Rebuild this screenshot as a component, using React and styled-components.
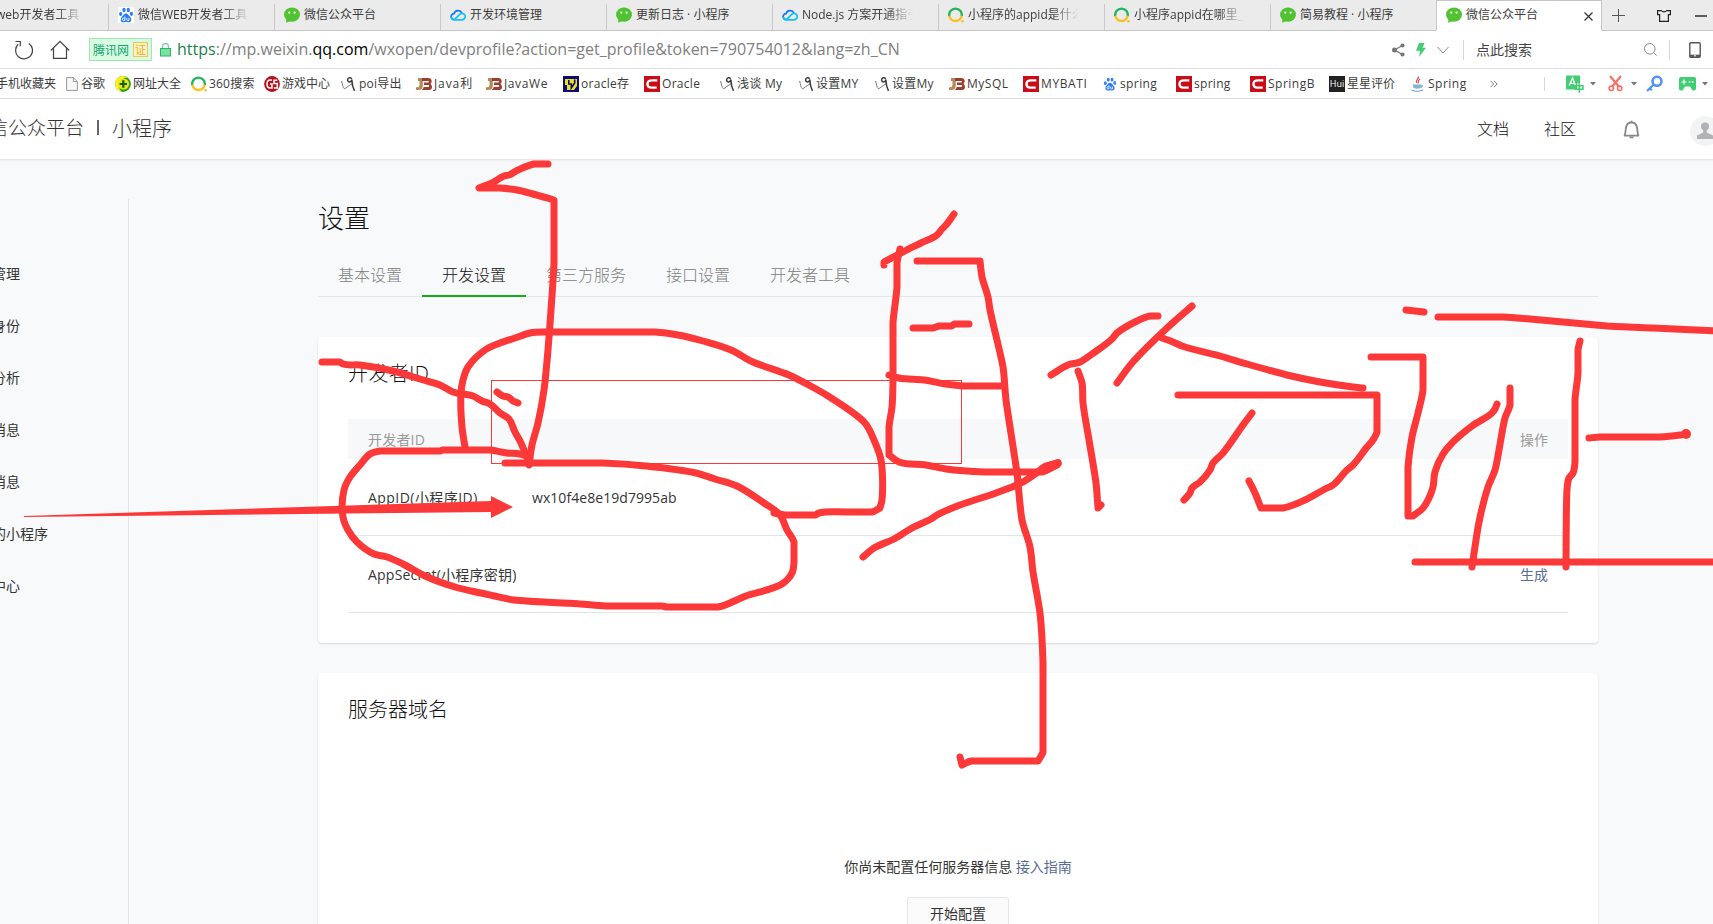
import React from "react";
import styled, { createGlobalStyle } from "styled-components";

const Global = createGlobalStyle`
  html, body { margin: 0; padding: 0; height: 100%; overflow: hidden; }
  body { background: #f8f9fb; font-family: "Open Sans", "Noto Sans CJK SC", sans-serif; color: #353535; }
  #root { height: 100%; }
  * { box-sizing: border-box; }
  svg { display: block; flex: none; }
`;

const Page = styled.div`
  position: relative;
  display: flex;
  flex-direction: column;
  width: 1713px;
  height: 924px;
  overflow: hidden;
`;

/* ---------- browser chrome ---------- */
const TabStrip = styled.div`
  display: flex;
  flex: none;
  height: 31px;
  background: #ebebeb;
`;
const TabList = styled.div`
  display: flex;
  flex: none;
  margin-left: -58px;
`;
const Tab = styled.div`
  display: flex;
  align-items: center;
  width: 166px;
  height: 31px;
  padding: 0 9px 2px 10px;
  border-bottom: 1px solid ${(p) => (p.$active ? "#fff" : "#c6c6c6")};
  border-top: 1px solid ${(p) => (p.$active ? "#c6c6c6" : "#ebebeb")};
  background: ${(p) =>
    p.$active ? "#fff" : "linear-gradient(#c8c8c8, #c8c8c8) left 0 top 3px / 1px 27px no-repeat #ebebeb"};
  ${(p) => p.$active && "border-left: 1px solid #c6c6c6; border-right: 1px solid #c6c6c6; padding-left: 9px;"}
`;
const TabLabel = styled.span`
  flex: none;
  width: 112px;
  margin-left: 4px;
  overflow: hidden;
  white-space: nowrap;
  font-size: 12px;
  line-height: 18px;
  color: #3c3c3c;
  mask-image: ${(p) => (p.$fade ? "linear-gradient(90deg, #000 84px, transparent 111px)" : "none")};
`;
const TabClose = styled.span`
  margin-left: 6px;
  padding-top: 3px;
`;
const TabTools = styled.div`
  display: flex;
  flex: 1;
  align-items: center;
  padding: 1px 0 0 10px;
  border-bottom: 1px solid #c6c6c6;
`;
const Gap = styled.span`
  flex: none;
  width: ${(p) => p.$w}px;
`;

const AddressBar = styled.div`
  display: flex;
  flex: none;
  align-items: center;
  height: 38px;
  padding-left: 14px;
  background: #fff;
  border-bottom: 1px solid #dedede;
`;
const SiteBadge = styled.span`
  display: flex;
  align-items: center;
  width: 63px;
  height: 23px;
  margin-left: 19px;
  padding-left: 3px;
  border: 1px solid #9fe8b4;
  background: #d9fbe1;
  color: #12a573;
  font-size: 12px;
`;
const CertMark = styled.span`
  display: flex;
  align-items: center;
  justify-content: center;
  width: 15px;
  height: 15px;
  margin-left: 4px;
  border: 1px solid #f3c552;
  background: #fdf4c8;
  color: #efae1d;
  font-size: 11px;
  line-height: 13px;
`;
const Url = styled.span`
  width: 1215px;
  margin-left: 6px;
  padding-bottom: 2px;
  font-size: 16px;
  line-height: 22px;
  letter-spacing: 0.01px;
  color: #808080;
  white-space: nowrap;
  i { font-style: normal; color: #1b7f4b; }
  b { font-weight: 400; color: #000; }
`;
const Rule = styled.span`
  flex: none;
  width: 1px;
  height: ${(p) => p.$h}px;
  background: #d6d6d6;
`;
const SearchHint = styled.span`
  width: 168px;
  margin-left: 12px;
  font-size: 14px;
  line-height: 20px;
  color: #444;
`;

const BookmarkBar = styled.div`
  display: flex;
  flex: none;
  align-items: center;
  height: 30px;
  background: #fff;
  border-bottom: 1px solid #dedede;
`;
const Bookmark = styled.span`
  display: flex;
  flex: none;
  align-items: center;
  width: ${(p) => p.$w}px;
  height: 28px;
  font-size: 12px;
  line-height: 18px;
  letter-spacing: ${(p) => p.$ls || 0}px;
  color: #3c3c3c;
  white-space: nowrap;
`;
const MobileBookmark = styled(Bookmark)`
  margin-left: -4px;
`;
const BookmarkIcon = styled.span`
  display: flex;
  flex: none;
  width: ${(p) => p.$w || 18}px;
  letter-spacing: 0;
`;
const Fold = styled.span`
  display: flex;
  width: 54px;
`;

/* ---------- site ---------- */
const SiteHeader = styled.header`
  display: flex;
  flex: none;
  align-items: center;
  height: 61px;
  background: #fff;
  border-bottom: 1px solid #e4e6e9;
  box-shadow: 0 1px 2px rgba(0, 0, 0, 0.05);
`;
const Brand = styled.div`
  display: flex;
  flex: none;
  align-items: center;
  width: 1477px;
  padding-bottom: 4px;
  color: #333;
  font-weight: 300;
  white-space: nowrap;
`;
const BrandName = styled.span`
  margin-left: -30px;
  font-size: 19px;
`;
const BrandBar = styled.span`
  width: 2px;
  height: 15px;
  margin: 0 13px 0 13px;
  background: #666;
`;
const BrandProduct = styled.span`
  font-size: 20px;
`;
const NavLink = styled.span`
  flex: none;
  width: ${(p) => p.$w}px;
  padding-bottom: 2px;
  font-size: 16px;
  font-weight: 300;
  color: #111;
`;
const Avatar = styled.span`
  flex: none;
  display: flex;
  align-items: center;
  justify-content: center;
  width: 30px;
  height: 30px;
  margin: 3px 0 0 50px;
  border-radius: 50%;
  background: #f2f3f4;
`;

const Body = styled.div`
  display: flex;
  flex: 1;
  min-height: 0;
`;
const Sidebar = styled.nav`
  flex: none;
  width: 129px;
  margin-top: 39px;
  padding-top: 49px;
  border-right: 1px solid #e4e5e8;
`;
const SideItem = styled.div`
  height: 52px;
  margin-left: -36px;
  font-size: 14px;
  line-height: 52px;
  color: #353535;
  white-space: nowrap;
`;
const Main = styled.main`
  flex: none;
  width: 1280px;
  margin-left: 189px;
`;
const PageTitle = styled.h2`
  margin: 37px 0 0;
  font-size: 26px;
  font-weight: 300;
  line-height: 42px;
  color: #111;
`;
const SubTabs = styled.div`
  display: flex;
  height: 58px;
  border-bottom: 1px solid #e4e5e8;
`;
const SubTab = styled.span`
  flex: none;
  height: 58px;
  padding: 0 20px;
  font-size: 16px;
  font-weight: 300;
  line-height: 73px;
  color: ${(p) => (p.$active ? "#111" : "#808080")};
  border-bottom: ${(p) => (p.$active ? "2px solid #1aad19" : "0")};
`;
const Card = styled.section`
  height: ${(p) => p.$h}px;
  margin-top: ${(p) => p.$top}px;
  padding: 21px 30px 0;
  border-radius: 4px;
  background: #fff;
  box-shadow: 0 1px 2px rgba(0, 0, 0, 0.14);
`;
const CardTitle = styled.h3`
  margin: 0;
  font-size: 20px;
  font-weight: 300;
  line-height: 31px;
  color: #111;
  letter-spacing: ${(p) => p.$ls || 0}px;
`;
const Row = styled.div`
  display: flex;
  align-items: center;
  height: ${(p) => (p.$head ? 40 : 77)}px;
  margin-top: ${(p) => (p.$head ? 30 : 0)}px;
  padding: 0 20px;
  font-size: 14px;
  background: ${(p) => (p.$head ? "#f6f8f9" : "#fff")};
  color: ${(p) => (p.$head ? "#9a9a9a" : "#353535")};
  border-bottom: ${(p) => (p.$head ? "0" : "1px solid #e4e5e8")};
`;
const Cell = styled.span`
  width: ${(p) => p.$w}px;
  white-space: nowrap;
  letter-spacing: ${(p) => p.$ls || 0}px;
`;
const Link = styled.a`
  color: #576b95;
`;
const EmptyState = styled.div`
  display: flex;
  flex-direction: column;
  align-items: center;
  margin-top: 131px;
  font-size: 14px;
  line-height: 22px;
`;
const SetupButton = styled.button`
  width: 102px;
  height: 34px;
  margin-top: 19px;
  padding: 0 0 1px;
  border: 1px solid #e4e5e8;
  border-radius: 3px;
  background: #fbfbfb;
  font: inherit;
  color: #353535;
`;
const Ink = styled.svg`
  position: absolute;
  inset: 0;
  pointer-events: none;
`;

/* ---------- icons ---------- */
const I = ({ s = 16, w, h, v, children }) => (
  <svg width={w || s} height={h || s} viewBox={v || `0 0 ${w || s} ${h || s}`} fill="none">
    {children}
  </svg>
);
const WeChat = () => (
  <I>
    <ellipse cx="8" cy="7.6" rx="8" ry="7.2" fill="#51c332" />
    <path d="M2.6 12 L2 15.8 L6.5 14Z" fill="#51c332" />
    <circle cx="5.3" cy="5.6" r="1.1" fill="#fff" />
    <circle cx="10.6" cy="5.6" r="1.1" fill="#fff" />
  </I>
);
const Paw = ({ plain, s = 16 }) => (
  <I s={s} v="0 0 16 16">
    {!plain && <rect width="16" height="16" fill="#fff" />}
    <g fill="#2f7df6">
      <ellipse cx="2.7" cy="7" rx="1.6" ry="2.1" />
      <ellipse cx="6" cy="3" rx="1.6" ry="2.2" />
      <ellipse cx="10.3" cy="3" rx="1.6" ry="2.2" />
      <ellipse cx="13.4" cy="6.8" rx="1.6" ry="2.1" />
      <path d="M8 6.6c2 0 2.600 2 4.200 3.300 1.600 1.400 1.500 5.300-1.200 5.400-1.300 0-2-.3-3-.3s-1.700.3-3 .3C2.300 15.200 2.200 11.300 3.800 9.900 5.400 8.600 6 6.600 8 6.600z" />
    </g>
    <path d="M6.900 9.600v3.900H5.600a1.200 1.200 0 0 1 0-2.400h1.300M8.800 11v1.800q0 .8 .8 .8h1.300V11" stroke="#fff" strokeWidth=".9" />
  </I>
);
const Cloud = () => (
  <I>
    <path d="M4.200 12.700a3 3 0 0 1-.2-6A4.300 4.300 0 0 1 12 6" stroke="#1677f0" strokeWidth="1.700" />
    <path d="M4 12.800h8a3.200 3.200 0 1 0-2.500-5.200L4.300 12.700" stroke="#13c2f5" strokeWidth="1.700" strokeLinejoin="round" />
    <path d="M4.200 12.700a3 3 0 0 1-2.700-2.500" stroke="#13c2f5" strokeWidth="1.700" />
  </I>
);
const Ring = () => (
  <I>
    <path d="M1.300 9A6.300 6.300 0 1 1 13.700 9" stroke="#20b65c" strokeWidth="2.400" />
    <path d="M1.300 8.800A6.300 6.300 0 0 0 13.700 8.800" stroke="#fcc01e" strokeWidth="2.400" />
    <circle cx="14.500" cy="14.300" r="1.300" fill="#fcc01e" />
  </I>
);
const FileIcon = () => (
  <I w={12} h={14}>
    <path d="M.6 .6h6.800l4 4v8.800H.6z" fill="#f7f7f7" stroke="#999" />
    <path d="M7.400 .6v4h4" stroke="#999" />
  </I>
);
const PlusBall = () => (
  <I>
    <circle cx="8" cy="8" r="7.900" fill="#2f9e12" />
    <path d="M.2 8.500A7.800 7.800 0 0 1 12.500 1.600C7 2 3.500 5.500 3.800 9.500 4 12 5 13.500 6.500 15.700A7.800 7.800 0 0 1 .2 8.500z" fill="#fff11b" />
    <circle cx="8.500" cy="8" r="5.600" fill="#e9e51c" />
    <path d="M8.300 4.300v7.400M4.600 8H12" stroke="#12601a" strokeWidth="2.200" />
  </I>
);
const GameBall = () => (
  <I>
    <circle cx="8" cy="8" r="7.900" fill="#b90f1d" />
    <path d="M8 4H6.200C3.900 4 3 6 3 8s.9 4 3.200 4H8V8H6M13.300 4.200H10v3.400h3.300V12H9.800" stroke="#fff" strokeWidth="1.500" />
  </I>
);
const Scrawl = () => (
  <I w={15} h={16}>
    <path d="M.6 5C1.600 8 1.500 11.500 3.500 12.800 5.500 12 7.500 9.500 11.500 7.600" stroke="#777" strokeWidth="1" />
    <path d="M10.800 2.700C8.700 .8 6.400 2 6.600 4.200c.3 2.500 3.700 2.200 4.200-.6C11 8 12 12 13.500 14.800" stroke="#3a3a3a" strokeWidth="1.500" />
  </I>
);
const JB = () => (
  <I>
    <path d="M2 2h4.800v7.500Q6.800 14 2 14H0v-2.800h1.500Q3.500 11.200 3.500 9V5H2z" fill="#b28a59" />
    <path d="M6 2h7q2.700 .5 2.700 3 0 2-1.300 2.800Q16 9 16 11q0 2.500-3 3H5.500q2-1.200 2.200-3h4.500q1-.2 1-1t-1-1H8V6.500h4q1-.2 1-.8T12 5H6z" fill="#9c3d2e" />
  </I>
);
const VBox = () => (
  <I>
    <rect width="16" height="16" fill="#0a0a7a" />
    <path d="M2 3h12v7l-3 4H4V9H2z" fill="#e8e21c" />
    <path d="M5.800 4v4h2.500V12l3.400-5V3.500" stroke="#0a0a7a" strokeWidth="1.600" />
  </I>
);
const CBox = () => (
  <I>
    <rect width="16" height="16" fill="#ca0c16" />
    <path d="M13.300 4.400H8C4.800 4.400 3.500 6 3.500 8s1 3.600 3.800 3.600h5.400" stroke="#fff" strokeWidth="2.400" />
  </I>
);
const HuiMark = styled.span`
  display: flex;
  align-items: center;
  justify-content: center;
  width: 16px;
  height: 16px;
  background: #222;
  color: #fff;
  font-size: 9px;
  line-height: 16px;
`;
const Cup = () => (
  <I w={13} h={16}>
    <path d="M7.500 .5C8 3 4 4 5.500 7M9 3C6.500 4.500 7.500 5.500 7 7.500" stroke="#e0493f" strokeWidth="1.200" />
    <path d="M1.500 8.500h8.300v3q-4 2.500-7.500 0z" fill="#82b4d6" />
    <path d="M9.800 9q3 .2 0 2.500M.5 14q5 2.500 11.500 0" stroke="#6ba3cb" strokeWidth="1.200" />
  </I>
);
const Caret = () => (
  <I w={6} h={4}>
    <path d="M0 0h6L3 3.600z" fill="#777" />
  </I>
);

const tabs = [
  { icon: WeChat, label: "微信web开发者工具", fade: true },
  { icon: Paw, label: "微信WEB开发者工具", fade: true },
  { icon: WeChat, label: "微信公众平台" },
  { icon: Cloud, label: "开发环境管理" },
  { icon: WeChat, label: "更新日志 · 小程序" },
  { icon: Cloud, label: "Node.js 方案开通指引", fade: true },
  { icon: Ring, label: "小程序的appid是什么", fade: true },
  { icon: Ring, label: "小程序appid在哪里_", fade: true },
  { icon: WeChat, label: "简易教程 · 小程序" },
  { icon: WeChat, label: "微信公众平台", active: true },
];

/* icon, label, pitch, icon box width, letter spacing */
const bookmarks = [
  [FileIcon, "谷歌", 49, 15],
  [PlusBall, "网址大全", 76],
  [Ring, "360搜索", 73, 18, 0.2],
  [GameBall, "游戏中心", 77],
  [Scrawl, "poi导出", 75, 18, 0.2],
  [JB, "Java利", 70, 18, 0.9],
  [JB, "JavaWe", 77, 18, 0.6],
  [VBox, "oracle存", 81, 18, 0.3],
  [CBox, "Oracle", 76, 18, 0.3],
  [Scrawl, "浅谈 My", 79, 17, 0.3],
  [Scrawl, "设置MY", 76, 17, 0.2],
  [Scrawl, "设置My", 74, 17, 0.2],
  [JB, "MySQL", 74, 18, 0.5],
  [CBox, "MYBATI", 80, 18, 0.6],
  [() => <Paw plain s={14} />, "spring", 73, 17, 0.4],
  [CBox, "spring", 74, 18, 0.3],
  [CBox, "SpringB", 79, 18, 0.5],
  [() => <HuiMark>Hui</HuiMark>, "星星评价", 82],
  [Cup, "Spring", 79, 17, 0.5],
];

const sideItems = ["成员管理", "用户身份", "数据分析", "模板消息", "客服消息", "附近的小程序", "运维中心"];

/* freehand pen strokes, in page coordinates */
const strokes = [
  "548,164 534,164 518,170 509,175 504,176 492,183 479,188 500,188 517,190 533,194 554,200 554,263 551,310 548,350 544,390 538,423 532,445 529,465",
  "322,362 340,362 343,364 360,365 393,371 420,379 440,385 453,392 473,396 482,401 490,404 500,413 509,419 515,432 520,441 529,462",
  "497,392 503,396 508,397 513,401 518,403",
  "465,447 462,427 461,393 463,380 468,367 485,350 500,343 515,338 530,333 547,332 655,332 678,335 703,341 731,350 753,362 789,375 828,396 865,423 874,440 881,460 882,500 880,508 872,512 846,512 819,513 815,515 785,515 774,513",
  "529,457 520,454 507,453 490,450 443,450 440,451 380,451 370,454 360,465 350,477 344,490 343,517 348,530 357,542 374,554 387,557 403,564 425,576 455,587 481,593 514,600 580,604 606,606 662,606 667,607 718,607 746,596 782,584 792,573 794,562 794,542 787,530 780,515 764,503 737,486 715,479 696,473 646,466 603,463 505,463",
  "954,214 946,225 942,229 937,235 921,243 903,252 884,262 884,265",
  "900,249 897,263 897,287 893,323 893,380 892,407 889,427 889,455 899,462 926,465 946,469 985,472 1042,472 1058,464",
  "917,261 980,261 982,277 988,297 990,310 1003,367 1006,400 1017,473 1022,520 1030,547 1033,572 1040,613 1043,663 1043,752 1038,761 971,761 962,765 960,757",
  "913,328 933,328 939,326 951,326 955,324 969,324",
  "889,375 899,378 924,380 946,384 964,386 1003,386",
  "863,557 874,548 894,539 912,528 931,519 937,515 960,505 996,493 1021,483 1035,474 1046,466 1058,463",
  "1051,375 1068,365 1080,362 1092,354 1112,339 1117,333 1137,321 1150,316 1158,316",
  "1078,371 1082,383 1083,403 1089,440 1096,483 1098,508 1101,505",
  "1192,306 1167,328 1132,363 1117,383",
  "1162,338 1173,342 1182,346 1220,356 1247,364 1287,375 1320,382 1353,387 1363,388",
  "1178,395 1377,395 1377,432 1373,440 1367,447 1353,465 1347,470 1333,485 1325,489 1305,500 1283,508 1261,508 1255,493 1249,481",
  "1252,413 1243,425 1223,453 1213,463 1210,470 1200,482 1192,488 1190,493 1184,500",
  "1406,310 1424,312",
  "1438,317 1503,317 1530,319 1607,326 1653,328 1717,331",
  "1371,357 1423,357 1423,390 1418,413 1412,437 1408,467 1408,516 1413,516 1423,508 1429,498 1433,487 1435,472 1443,454 1452,443 1472,426 1492,413 1495,409 1497,404",
  "1510,388 1510,405 1505,418 1495,470 1488,487 1479,522 1472,567",
  "1580,341 1578,350 1578,373 1575,400 1575,462 1573,473 1569,478 1567,490 1566,567",
  "1589,438 1600,437 1660,437 1680,435 1686,434",
  "1415,562 1720,562",
];

/* rounds gentle bends of a stroke and keeps its sharp corners */
function penPath(source) {
  const p = source.split(" ").map((q) => q.split(",").map(Number));
  const dir = (a, b) => {
    const l = Math.hypot(b[0] - a[0], b[1] - a[1]);
    return [(b[0] - a[0]) / l, (b[1] - a[1]) / l];
  };
  const tangents = p.map((pt, i) => {
    const before = i > 0 ? dir(p[i - 1], pt) : null;
    const after = i < p.length - 1 ? dir(pt, p[i + 1]) : null;
    if (!before) return [after, after];
    if (!after) return [before, before];
    const dot = before[0] * after[0] + before[1] * after[1];
    if (dot < 0.8) return [before, after];
    const mid = dir([0, 0], [before[0] + after[0], before[1] + after[1]]);
    return [mid, mid];
  });
  let d = `M${p[0]}`;
  for (let i = 1; i < p.length; i++) {
    const a = p[i - 1];
    const b = p[i];
    const k = Math.min(10, Math.hypot(b[0] - a[0], b[1] - a[1]) / 3);
    const out = tangents[i - 1][1];
    const inn = tangents[i][0];
    const straight = a[0] === b[0] || a[1] === b[1];
    d += straight
      ? `L${b}`
      : `C${a[0] + out[0] * k},${a[1] + out[1] * k} ${b[0] - inn[0] * k},${b[1] - inn[1] * k} ${b}`;
  }
  return d;
}

export default function App() {
  return (
    <Page>
      <Global />
      <TabStrip>
        <TabList>
          {tabs.map(({ icon: Icon, label, fade, active }, i) => (
            <Tab key={i} $active={active}>
              <Icon />
              <TabLabel $fade={fade}>{label}</TabLabel>
              {active && (
                <TabClose>
                  <I s={9}><path d="M.5 .5l8 8M8.500 .5l-8 8" stroke="#333" strokeWidth="1.200" /></I>
                </TabClose>
              )}
            </Tab>
          ))}
        </TabList>
        <TabTools>
          <I s={13}><path d="M6.500 0v13M0 6.500h13" stroke="#555" /></I>
          <Gap $w={32} />
          <I w={14} h={12}><path d="M.6 .6h3.600q2.800 2.600 5.600 0h3.600v4h-2v6.800H2.600V4.600h-2z" stroke="#222" strokeWidth="1.200" /></I>
          <Gap $w={24} />
          <I w={12} h={2}><path d="M0 1h12" stroke="#222" strokeWidth="1.400" /></I>
        </TabTools>
      </TabStrip>

      <AddressBar>
        <I s={20}><path d="M4.200 4.300A8.500 8.500 0 1 0 14.800 3.400" stroke="#444" strokeWidth="1.200" /><path d="M1.500 1.500h4.800v4.800" stroke="#444" strokeWidth="1.200" /></I>
        <Gap $w={16} />
        <I s={20}><path d="M.8 10.500L10 1.300 19.200 10.500M3.500 8.500v9.800h13V8.500" stroke="#444" strokeWidth="1.200" /></I>
        <SiteBadge>
          腾讯网<CertMark>证</CertMark>
        </SiteBadge>
        <Gap $w={8} />
        <I w={11} h={14}>
          <path d="M2.500 6V3.500a3 3 0 0 1 6 0V6" stroke="#7cc7c0" strokeWidth="1.400" />
          <rect x=".5" y="5.500" width="10" height="7.500" fill="#7be0a0" stroke="#27b866" />
        </I>
        <Url><i>https</i>://mp.weixin.<b>qq.com</b>/wxopen/devprofile?action=get_profile&amp;token=790754012&amp;lang=zh_CN</Url>
        <I w={13} h={14}>
          <path d="M10.500 2.500L2.500 7l8 4.500" stroke="#777" strokeWidth="1.300" />
          <circle cx="10.500" cy="2.500" r="2.100" fill="#777" /><circle cx="2.500" cy="7" r="2.500" fill="#777" /><circle cx="10.500" cy="11.500" r="2.100" fill="#777" />
        </I>
        <Gap $w={11} />
        <I w={10} h={14}><path d="M3 0h5.500L6.600 4.700H10L3 14l1.300-6.300H0z" fill="#3fce72" /></I>
        <Gap $w={11} />
        <I w={12} h={8}><path d="M.5 1L6 7l5.500-6" stroke="#888" /></I>
        <Gap $w={14} />
        <Rule $h={20} />
        <SearchHint>点此搜索</SearchHint>
        <I s={14}><circle cx="5.800" cy="5.800" r="5.300" stroke="#888" /><path d="M9.600 9.600l3 3" stroke="#888" /></I>
        <Gap $w={11} />
        <Rule $h={20} />
        <Gap $w={19} />
        <I w={12} h={16}><rect x=".8" y=".8" width="10.400" height="14.400" rx="1" stroke="#555" strokeWidth="1.400" /><path d="M1 13.800h10" stroke="#555" strokeWidth="2.200" /><path d="M5 13.800h2" stroke="#fff" /></I>
      </AddressBar>

      <BookmarkBar>
        <MobileBookmark $w={70}>手机收藏夹</MobileBookmark>
        {bookmarks.map(([Icon, label, w, iw, ls], i) => (
          <Bookmark key={i} $w={w} $ls={ls}>
            <BookmarkIcon $w={iw}><Icon /></BookmarkIcon>
            {label}
          </Bookmark>
        ))}
        <Fold><I w={8} h={8}><path d="M.5 .8L3.700 4 .5 7.200M4 .8L7.200 4 4 7.200" stroke="#777" /></I></Fold>
        <Rule $h={14} />
        <Gap $w={21} />
        <I w={19} h={18}>
          <path d="M1 .5h12q1 0 1 1v7h-3v6H1q-1 0-1-1v-12q0-1 1-1z" fill="#3fce72" />
          <path d="M3.300 10.500L6.500 3l3 7.500M4.500 8.300h4" stroke="#fff" strokeWidth="1.300" />
          <path d="M9.500 10.800h7.500v3.400H9.500zM13.300 8.500v9.300" stroke="#3fce72" strokeWidth="1.500" />
        </I>
        <Gap $w={5} />
        <Caret />
        <Gap $w={12} />
        <I w={15} h={17}>
          <path d="M2 1L10.700 11.500M13 1L4.300 11.500" stroke="#fb6f66" strokeWidth="2.200" />
          <circle cx="3.300" cy="13.300" r="2.200" stroke="#fb6f66" strokeWidth="1.600" /><circle cx="11.700" cy="13.300" r="2.200" stroke="#fb6f66" strokeWidth="1.600" />
        </I>
        <Gap $w={8} />
        <Caret />
        <Gap $w={9} />
        <I w={17} h={17}><circle cx="11" cy="6.300" r="4.500" stroke="#5390f8" strokeWidth="2.600" /><path d="M7.800 9.500L1 16M3 12.500l2.800 2.800" stroke="#5390f8" strokeWidth="2.200" /></I>
        <Gap $w={16} />
        <I w={17} h={15}>
          <path d="M2 1h13q2 0 2 2v9.500q0 2-2 2h-1.500L11 10.500H6L3.500 14.500H2q-2 0-2-2V3q0-2 2-2z" fill="#3fce72" />
          <path d="M5 3.500v5M2.500 6h5" stroke="#fff" strokeWidth="1.200" /><circle cx="10.500" cy="6" r=".9" fill="#fff" /><circle cx="13.500" cy="6" r=".9" fill="#fff" />
        </I>
        <Gap $w={6} />
        <Caret />
      </BookmarkBar>

      <SiteHeader>
        <Brand>
          <BrandName>微信公众平台</BrandName>
          <BrandBar />
          <BrandProduct>小程序</BrandProduct>
        </Brand>
        <NavLink $w={67}>文档</NavLink>
        <NavLink $w={79}>社区</NavLink>
        <I w={17} h={19}>
          <path d="M1.600 15.600C2.600 13 2.500 10.500 3 7.500 3.600 4 5.500 2.500 8.500 2.500S13.400 4 14 7.500c.5 3 .4 5.500 1.400 8.100z" stroke="#888" strokeWidth="1.800" strokeLinejoin="round" />
          <path d="M8.500 .8v1.700M6.500 17.300h4" stroke="#888" strokeWidth="1.800" />
        </I>
        <Avatar>
          <I w={16} h={17}><circle cx="8" cy="4.500" r="4" fill="#b0b2b5" /><path d="M6.200 7h3.600v3.500l6.200 3V17H0v-3.500l6.200-3z" fill="#b0b2b5" /></I>
        </Avatar>
      </SiteHeader>

      <Body>
        <Sidebar>
          {sideItems.map((t) => <SideItem key={t}>{t}</SideItem>)}
        </Sidebar>
        <Main>
          <PageTitle>设置</PageTitle>
          <SubTabs>
            <SubTab>基本设置</SubTab>
            <SubTab $active>开发设置</SubTab>
            <SubTab>第三方服务</SubTab>
            <SubTab>接口设置</SubTab>
            <SubTab>开发者工具</SubTab>
          </SubTabs>
          <Card $top={40} $h={306}>
            <CardTitle $ls={0.4}>开发者ID</CardTitle>
            <Row $head>
              <Cell $w={1152} $ls={0.2}>开发者ID</Cell>
              <Cell>操作</Cell>
            </Row>
            <Row>
              <Cell $w={164} $ls={0.45}>AppID(小程序ID)</Cell>
              <Cell $w={988} $ls={0.06}>wx10f4e8e19d7995ab</Cell>
            </Row>
            <Row>
              <Cell $w={1152} $ls={0.22}>AppSecret(小程序密钥)</Cell>
              <Cell><Link>生成</Link></Cell>
            </Row>
          </Card>
          <Card $top={30} $h={300}>
            <CardTitle>服务器域名</CardTitle>
            <EmptyState>
              <span>你尚未配置任何服务器信息 <Link>接入指南</Link></span>
              <SetupButton>开始配置</SetupButton>
            </EmptyState>
          </Card>
        </Main>
      </Body>

      <Ink width="1713" height="924" viewBox="0 0 1713 924" fill="none">
        <rect x="491.500" y="380.500" width="470" height="83" stroke="#fc3838" />
        <path d="M24 516L491 501V496l22 11-22 11v-6L24 517z" fill="#fc3838" />
        {strokes.map((s, i) => (
          <path key={i} d={penPath(s)} stroke="#fc3838" strokeWidth="7" strokeLinecap="round" strokeLinejoin="round" />
        ))}
        <path d="M1045 467L1058 462.500M1046 470L1057 465" stroke="#fc3838" strokeWidth="7" strokeLinecap="round" />
        <circle cx="1686" cy="434" r="5" fill="#fc3838" />
      </Ink>
    </Page>
  );
}
